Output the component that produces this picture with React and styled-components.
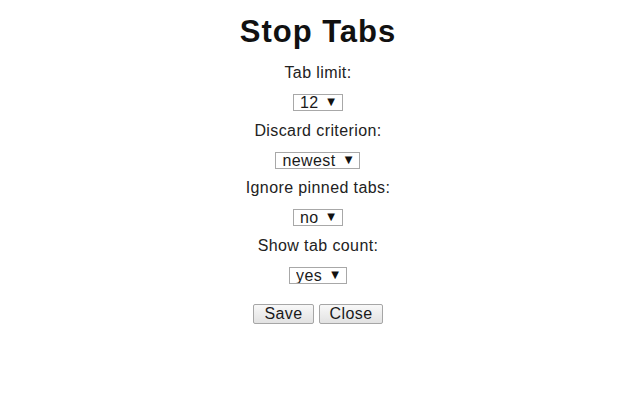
import styled, { createGlobalStyle } from "styled-components";
import { useState } from "react";

const GlobalStyle = createGlobalStyle`
  html, body {
    margin: 0;
    padding: 0;
    background: #fff;
  }
  body {
    font-family: "Liberation Sans", Arial, sans-serif;
    color: #1a1a1a;
  }
`;

const Page = styled.div`
  display: flex;
  flex-direction: column;
  align-items: center;
  padding: 14px 4px 0 0;
`;

const Title = styled.h1`
  margin: 0 0 14px;
  font-size: 31px;
  line-height: 36px;
  letter-spacing: 1px;
  font-weight: bold;
  color: #111;
`;

const Field = styled.div`
  display: flex;
  flex-direction: column;
  align-items: center;
  margin-bottom: 10.7px;
`;

const Label = styled.label`
  font-size: 16px;
  line-height: 18px;
  letter-spacing: 0.4px;
  color: #222;
  margin-bottom: 12px;
`;

const SelectBox = styled.div`
  position: relative;
  width: ${(p) => p.$width}px;
  height: 17px;
`;

const Select = styled.select`
  appearance: none;
  -webkit-appearance: none;
  box-sizing: border-box;
  width: 100%;
  height: 100%;
  margin: 0;
  padding: 0 0 0 6px;
  border: 1px solid #a8a8a8;
  border-radius: 0;
  background: #fff;
  font-family: "Liberation Sans", Arial, sans-serif;
  font-size: 16px;
  line-height: 15px;
  letter-spacing: 0.4px;
  color: #1a1a1a;
  outline: none;
`;

const Arrow = styled.span`
  position: absolute;
  right: 8px;
  top: 2px;
  font-family: "DejaVu Sans", sans-serif;
  font-size: 10px;
  line-height: 12px;
  color: #111;
  pointer-events: none;
`;

const Buttons = styled.div`
  display: flex;
  gap: 5px;
  margin-top: 9px;
`;

const Button = styled.button`
  box-sizing: border-box;
  width: ${(p) => p.$width}px;
  height: 20px;
  padding: 0;
  border: 1px solid #a6a6a6;
  border-radius: 2px;
  background: linear-gradient(#f8f8f8, #e2e2e2);
  font-family: "Liberation Sans", Arial, sans-serif;
  font-size: 16px;
  line-height: 18px;
  letter-spacing: 0.4px;
  color: #1a1a1a;
`;

const fields = [
  { id: "limit", label: "Tab limit:", width: 50, options: ["8", "10", "12", "15", "20"], value: "12" },
  { id: "criterion", label: "Discard criterion:", width: 85, options: ["newest", "oldest"], value: "newest" },
  { id: "pinned", label: "Ignore pinned tabs:", width: 50, options: ["no", "yes"], value: "no" },
  { id: "count", label: "Show tab count:", width: 58, options: ["yes", "no"], value: "yes" },
];

function Dropdown({ field }) {
  const [value, setValue] = useState(field.value);
  return (
    <SelectBox $width={field.width}>
      <Select id={field.id} value={value} onChange={(e) => setValue(e.target.value)}>
        {field.options.map((o) => (
          <option key={o} value={o}>
            {o}
          </option>
        ))}
      </Select>
      <Arrow>▼</Arrow>
    </SelectBox>
  );
}

export default function App() {
  return (
    <>
      <GlobalStyle />
      <Page>
        <Title>Stop Tabs</Title>
        {fields.map((f) => (
          <Field key={f.id}>
            <Label htmlFor={f.id}>{f.label}</Label>
            <Dropdown field={f} />
          </Field>
        ))}
        <Buttons>
          <Button $width={61}>Save</Button>
          <Button $width={64}>Close</Button>
        </Buttons>
      </Page>
    </>
  );
}
